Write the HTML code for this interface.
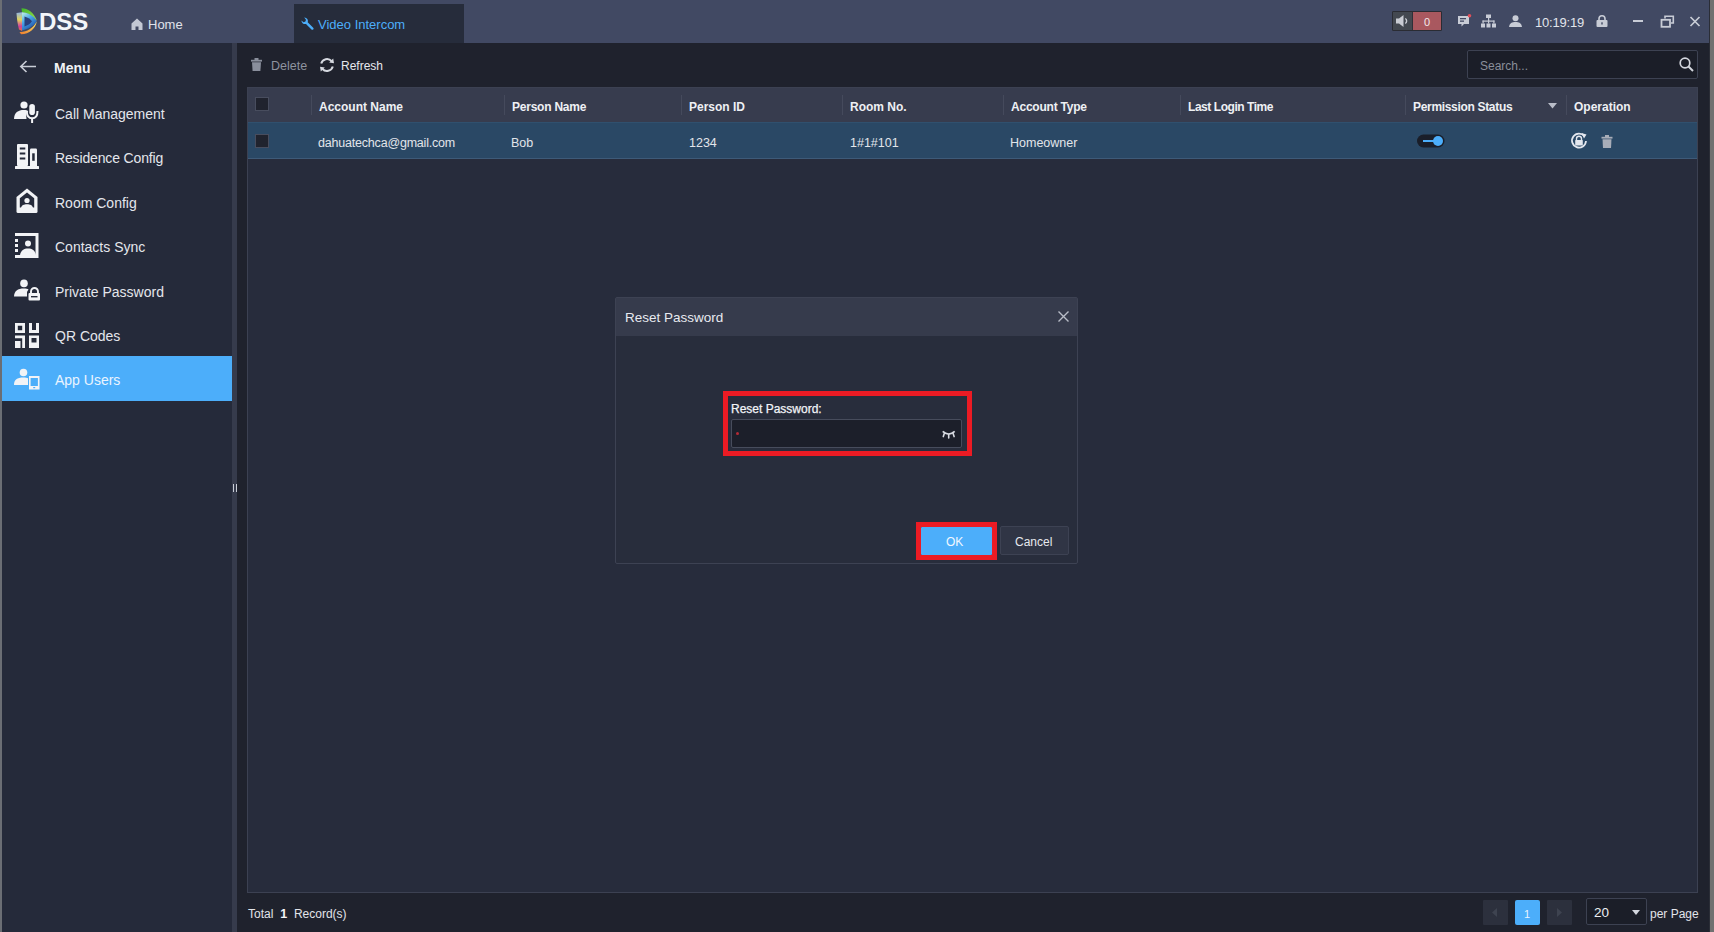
<!DOCTYPE html>
<html><head><meta charset="utf-8">
<style>
*{margin:0;padding:0;box-sizing:border-box}
html,body{width:1714px;height:932px;overflow:hidden;background:#1f222d;font-family:"Liberation Sans",sans-serif;color:#e6e8ee}
.a{position:absolute}
.t{position:absolute;white-space:pre;line-height:1}
#lb{left:0;top:0;width:2px;height:932px;background:#6b6e74}
#rb{left:1710px;top:0;width:4px;height:932px;background:#707070}
#top{left:2px;top:0;width:1708px;height:43px;background:#414963}
#tab{left:294px;top:4px;width:170px;height:39px;background:#262c3b}
#side{left:2px;top:43px;width:230px;height:889px;background:#252a3a}
#split{left:232px;top:43px;width:5px;height:889px;background:#363b4c}
#main{left:237px;top:43px;width:1473px;height:889px;background:#1f222d}
.mi{position:absolute;left:2px;width:230px;height:45px}
.mi .t{left:53px;font-size:14px;color:#e4e6ec}
.act{background:#4caefa}
#search{left:1467px;top:50px;width:231px;height:29px;background:#1b1e28;border:1px solid #3d4252;border-radius:2px}
#table{left:247px;top:87px;width:1451px;height:806px;background:#272c3c;border:1px solid #3c4152}
#thead{left:248px;top:88px;width:1449px;height:34px;background:#373c4e}
#row{left:248px;top:122px;width:1449px;height:37px;background:#2a4865;border-top:1px solid #30506e;border-bottom:1px solid #3e5a78}
.sep{position:absolute;top:95px;width:1px;height:20px;background:#454a5c}
.th{position:absolute;top:101px;font-size:12px;font-weight:bold;color:#eef0f4;white-space:pre;line-height:1}
.td{position:absolute;top:137px;font-size:12.5px;color:#e2e5ea;white-space:pre;line-height:1}
.cb{position:absolute;width:14px;height:14px;background:#20232e;border:1px solid #484d5e}
#dlg{left:615px;top:297px;width:463px;height:267px;background:#282d3c;border:1px solid #3d4253;border-radius:2px}
#dlgh{left:616px;top:298px;width:461px;height:38px;background:#363b4c}
</style></head>
<body>
<div class="a" id="top"></div>
<div class="a" id="lb"></div>
<div class="a" id="rb"></div>
<div class="a" id="tab"></div>

<!-- logo -->
<svg class="a" style="left:15px;top:7px" width="24" height="28" viewBox="0 0 24 28">
  <defs>
    <linearGradient id="gg" x1="0" y1="0" x2="1" y2="1"><stop offset="0" stop-color="#3fb52a"/><stop offset="1" stop-color="#9ee04a"/></linearGradient>
    <linearGradient id="gb" x1="0" y1="0" x2="0.6" y2="1"><stop offset="0" stop-color="#c8f5e0"/><stop offset="0.45" stop-color="#49a6e8"/><stop offset="1" stop-color="#1d4fa8"/></linearGradient>
    <linearGradient id="gl" x1="0" y1="0" x2="0" y2="1"><stop offset="0" stop-color="#8fb4e6"/><stop offset="0.4" stop-color="#e2d45a"/><stop offset="0.75" stop-color="#d0409e"/><stop offset="1" stop-color="#e8703a"/></linearGradient>
    <linearGradient id="go" x1="0" y1="1" x2="1" y2="0"><stop offset="0" stop-color="#f07a2a"/><stop offset="1" stop-color="#f2e46a"/></linearGradient>
  </defs>
  <path d="M6.5 1.2 C12 1 19 5 21.8 13.5 L19 12.3 C16 8 11.5 5.5 7 5.2 Z" fill="url(#gg)"/>
  <path d="M7 5.2 C13 5.5 19 9 21.8 14 C19 19 13.5 22 7 23.5 Z" fill="url(#gb)"/>
  <path d="M9.5 9.5 C13 10.5 16 12.5 17 14.2 C15.5 16.5 12.5 18.5 9.5 19.5 Z" fill="#2a3f7c"/>
  <path d="M1.5 6 L7 5.2 L7 24 L4 22.5 C2.5 17 1.8 11 1.5 6 Z" fill="url(#gl)"/>
  <path d="M4.5 25 C11 25.5 18 21.5 21.8 14.5 C20.5 21.5 14.5 27 6 27.3 Z" fill="url(#go)"/>
</svg>
<div class="t" style="left:39px;top:10px;font-size:24px;font-weight:bold;color:#f4f6fa">DSS</div>

<!-- home tab -->
<svg class="a" style="left:131px;top:18px" width="12" height="12" viewBox="0 0 12 12"><path d="M6 0.5 L11.5 5.5 L11.5 12 L7.5 12 L7.5 8.5 L4.5 8.5 L4.5 12 L0.5 12 L0.5 5.5 Z" fill="#c3c8d4"/></svg>
<div class="t" style="left:148px;top:18px;font-size:13px;color:#e0e3ea">Home</div>
<!-- video intercom tab -->
<svg class="a" style="left:301px;top:17px" width="13" height="13" viewBox="0 0 13 13"><path transform="translate(13 0) scale(-1 1)" d="M9.5 0.5 A3.5 3.5 0 0 0 6.3 5.2 L0.8 10.7 A1.2 1.2 0 0 0 2.5 12.4 L8 6.9 A3.5 3.5 0 0 0 12.6 3.6 L10.4 5.2 L8.6 4.6 L8.0 2.8 L9.8 0.6 Z" fill="#4caefa"/></svg>
<div class="t" style="left:318px;top:18px;font-size:13px;color:#4caefa">Video Intercom</div>

<!-- sidebar -->
<div class="a" id="side"></div>
<div class="a" id="split"></div>
<div class="a" style="left:233px;top:484px;width:1px;height:8px;background:#c8ccd6"></div>
<div class="a" style="left:236px;top:484px;width:1px;height:8px;background:#c8ccd6"></div>


<!-- top right -->
<div class="a" style="left:1392px;top:11px;width:50px;height:20px;background:#2e3038;border:1px solid #2a2c33;border-radius:1px"></div>
<div class="a" style="left:1393px;top:12px;width:19px;height:18px;background:#434850"></div>
<svg class="a" style="left:1395px;top:14px" width="15" height="14" viewBox="0 0 15 14"><path d="M1 4.5 H4 L8.5 1 V13 L4 9.5 H1 Z" fill="#c9ccd3"/><path d="M10.3 4.5 A3 3 0 0 1 10.3 9.5" stroke="#c9ccd3" stroke-width="1.4" fill="none"/></svg>
<div class="a" style="left:1413px;top:12px;width:28px;height:18px;background:#a9585f"></div>
<div class="t" style="left:1424px;top:17px;font-size:11px;color:#f4e8ea">0</div>
<svg class="a" style="left:1457px;top:14px" width="15" height="14" viewBox="0 0 15 14"><path d="M1 2 H12 V10 H7 L4.5 12.5 V10 H1 Z" fill="#c8ccd6"/><rect x="3" y="4" width="6" height="1.3" fill="#414963"/><rect x="3" y="6.5" width="4" height="1.3" fill="#414963"/><circle cx="12.5" cy="1.8" r="1.8" fill="#e0505a"/></svg>
<svg class="a" style="left:1481px;top:14px" width="15" height="14" viewBox="0 0 15 14"><rect x="5" y="0.5" width="5" height="3.5" fill="#c8ccd6"/><rect x="7" y="4" width="1.2" height="3" fill="#c8ccd6"/><rect x="1.5" y="6.5" width="12" height="1.2" fill="#c8ccd6"/><rect x="1.5" y="6.5" width="1.2" height="3" fill="#c8ccd6"/><rect x="12.3" y="6.5" width="1.2" height="3" fill="#c8ccd6"/><rect x="7" y="6.5" width="1.2" height="3" fill="#c8ccd6"/><rect x="0" y="9.5" width="4" height="4" fill="#c8ccd6"/><rect x="5.5" y="9.5" width="4" height="4" fill="#c8ccd6"/><rect x="11" y="9.5" width="4" height="4" fill="#c8ccd6"/></svg>
<svg class="a" style="left:1509px;top:15px" width="13" height="12" viewBox="0 0 13 12"><circle cx="6.5" cy="3.2" r="3" fill="#c8ccd6"/><path d="M0 12 C0.5 8 3 7 6.5 7 C10 7 12.5 8 13 12 Z" fill="#c8ccd6"/></svg>
<div class="t" style="left:1535px;top:16px;font-size:13px;letter-spacing:-0.2px;color:#e2e5ec">10:19:19</div>
<svg class="a" style="left:1596px;top:15px" width="12" height="12" viewBox="0 0 12 12"><path d="M3 5.5 V3.8 A3 3 0 0 1 9 3.8 V5.5" stroke="#c8ccd6" stroke-width="1.6" fill="none"/><rect x="0.5" y="5" width="11" height="7" rx="1" fill="#c8ccd6"/><rect x="5.3" y="7.3" width="1.4" height="2.2" fill="#414963"/></svg>
<div class="a" style="left:1633px;top:20px;width:10px;height:2px;background:#c8ccd6"></div>
<svg class="a" style="left:1660px;top:15px" width="15" height="13" viewBox="0 0 15 13"><rect x="1.5" y="4.8" width="8.5" height="7" stroke="#c8ccd6" stroke-width="1.8" fill="none"/><path d="M5 3.5 V1.2 H13.3 V8 H11" stroke="#c8ccd6" stroke-width="1.6" fill="none"/></svg>
<svg class="a" style="left:1689px;top:16px" width="12" height="11" viewBox="0 0 12 11"><path d="M1.5 1 L10.5 10 M10.5 1 L1.5 10" stroke="#c8ccd6" stroke-width="1.7"/></svg>
<div class="a" style="left:1709px;top:0;width:1px;height:932px;background:#2a2d36"></div>

<!-- menu header -->
<svg class="a" style="left:19px;top:60px" width="18" height="13" viewBox="0 0 18 13"><path d="M17 6.5 H2 M7.5 1 L1.8 6.5 L7.5 12" stroke="#c9cdd6" stroke-width="1.6" fill="none"/></svg>
<div class="t" style="left:54px;top:61px;font-size:14px;font-weight:bold;color:#f0f2f6">Menu</div>

<!-- menu items -->
<div class="mi" style="top:91px"><div class="t" style="top:16px">Call Management</div></div>
<div class="mi" style="top:135px"><div class="t" style="top:16px;letter-spacing:-0.15px">Residence Config</div></div>
<div class="mi" style="top:180px"><div class="t" style="top:16px">Room Config</div></div>
<div class="mi" style="top:224px"><div class="t" style="top:16px">Contacts Sync</div></div>
<div class="mi" style="top:269px"><div class="t" style="top:16px">Private Password</div></div>
<div class="mi" style="top:313px"><div class="t" style="top:16px">QR Codes</div></div>
<div class="mi act" style="top:356px"><div class="t" style="top:17px;color:#eaf4ff">App Users</div></div>

<!-- menu icons -->
<svg class="a" style="left:14px;top:101px" width="26" height="23" viewBox="0 0 26 23">
  <circle cx="10" cy="4" r="3.6" fill="#f2f3f6"/>
  <path d="M0 18 C0.3 11.5 4 9 10 9 C12 9 13.5 9.5 14.3 10 L12 12.5 L12.5 18 Z" fill="#f2f3f6"/>
  <rect x="15.3" y="3" width="5.6" height="11" rx="2.8" fill="#f2f3f6"/>
  <path d="M12.8 10 C12.8 15.5 15 17.3 18.1 17.3 C21.2 17.3 23.5 15.5 23.5 10" stroke="#f2f3f6" stroke-width="2" fill="none"/>
  <rect x="17.1" y="17" width="2" height="5" fill="#f2f3f6"/>
</svg>
<svg class="a" style="left:15px;top:144px" width="24" height="25" viewBox="0 0 24 25">
  <rect x="2" y="0" width="11" height="22" rx="1" fill="#f2f3f6"/>
  <rect x="4.8" y="3.5" width="5.5" height="2" fill="#252a3a"/>
  <rect x="4.8" y="8.5" width="5.5" height="2" fill="#252a3a"/>
  <rect x="4.8" y="13.5" width="5.5" height="2" fill="#252a3a"/>
  <rect x="15" y="4.5" width="7" height="18" rx="1.2" fill="#f2f3f6"/>
  <rect x="17.2" y="9.3" width="2.5" height="7.5" fill="#252a3a"/>
  <rect x="0" y="22" width="24" height="3" rx="0.5" fill="#f2f3f6"/>
</svg>
<svg class="a" style="left:16px;top:188px" width="22" height="26" viewBox="0 0 22 26">
  <path d="M11 0.5 L21.5 9 V23.5 Q21.5 25 20 25 H2 Q0.5 25 0.5 23.5 V9 Z" fill="#f2f3f6"/>
  <path d="M11 4.5 L18.2 10.3 V19.5 H3.8 V10.3 Z" fill="#252a3a"/>
  <circle cx="11" cy="12.5" r="2.6" fill="#f2f3f6"/>
  <path d="M5 20 C5.5 17 8 16.2 11 16.2 C14 16.2 16.5 17 17 20 Z" fill="#f2f3f6"/>
</svg>
<svg class="a" style="left:15px;top:233px" width="24" height="25" viewBox="0 0 24 25">
  <path d="M0 0 H23.5 V25 H0 V22 H20.5 V3 H0 Z" fill="#f2f3f6"/>
  <rect x="0" y="6" width="3" height="3" fill="#f2f3f6"/>
  <rect x="0" y="11" width="3" height="3" fill="#f2f3f6"/>
  <rect x="0" y="16" width="3" height="3" fill="#f2f3f6"/>
  <circle cx="13" cy="10.5" r="3" fill="#f2f3f6"/>
  <path d="M5 22 C6 17 9 15.5 13 15.5 C17 15.5 20 17 21 22 Z" fill="#f2f3f6"/>
</svg>
<svg class="a" style="left:14px;top:279px" width="26" height="22" viewBox="0 0 26 22">
  <circle cx="10" cy="4.4" r="3.8" fill="#f2f3f6"/>
  <path d="M0 17.5 C0.3 12 3.5 9.5 10 9.5 C12 9.5 13.5 9.8 14.5 10.3 L13 13 V17.5 Z" fill="#f2f3f6"/>
  <path d="M17 14.5 V12.5 A3.5 3.5 0 0 1 24 12.5 V14.5" stroke="#f2f3f6" stroke-width="1.9" fill="none"/>
  <rect x="14.5" y="14" width="11.5" height="7.5" rx="1" fill="#f2f3f6"/>
  <rect x="17" y="17" width="6.5" height="1.4" fill="#252a3a"/>
</svg>
<svg class="a" style="left:15px;top:323px" width="24" height="25" viewBox="0 0 24 25">
  <path d="M0 0 H10 V10 H0 Z M2.8 2.8 V7.2 H7.2 V2.8 Z" fill="#f2f3f6" fill-rule="evenodd"/>
  <path d="M14 0 H17 V7 H21 V0 H24 V10 H14 Z" fill="#f2f3f6"/>
  <path d="M0 12.5 H10 V25 H7.2 V15.3 H0 Z" fill="#f2f3f6"/>
  <rect x="0" y="18" width="5.5" height="7" fill="#f2f3f6"/>
  <path d="M14 12.5 H24 V25 H14 Z M16.5 15 V19.5 H21.5 V15 Z" fill="#f2f3f6" fill-rule="evenodd"/>
</svg>
<svg class="a" style="left:14px;top:368px" width="26" height="22" viewBox="0 0 26 22">
  <circle cx="9.5" cy="4.5" r="3.8" fill="#f2f3f6"/>
  <path d="M0 17 C0 11.5 3 9.5 9.5 9.5 C11.5 9.5 13 9.8 14 10.2 L14 17 Z" fill="#f2f3f6"/>
  <path d="M15 8 H25.5 V21.5 H15 Z M16.6 10 V18 H23.9 V10 Z" fill="#f2f3f6" fill-rule="evenodd"/>
  <rect x="19.2" y="19" width="2" height="1.2" fill="#4caefa"/>
</svg>

<!-- main -->
<svg class="a" style="left:251px;top:58px" width="11" height="13" viewBox="0 0 11 13"><rect x="3.5" y="0" width="4" height="2" fill="#8a8f9c"/><rect x="0" y="1.8" width="11" height="1.8" fill="#8a8f9c"/><path d="M1 4.2 H10 L9.4 13 H1.6 Z" fill="#8a8f9c"/></svg>
<div class="t" style="left:271px;top:60px;font-size:12.5px;color:#8e939f">Delete</div>
<svg class="a" style="left:319px;top:57px" width="16" height="16" viewBox="0 0 16 16"><path d="M12.6 4.2 A6 6 0 0 0 2.2 6.5" stroke="#d6d9e0" stroke-width="2" fill="none"/><path d="M3.4 11.8 A6 6 0 0 0 13.8 9.5" stroke="#d6d9e0" stroke-width="2" fill="none"/><path d="M10.2 5.6 L15 6.2 L14.2 1.4 Z" fill="#d6d9e0"/><path d="M5.8 10.4 L1 9.8 L1.8 14.6 Z" fill="#d6d9e0"/></svg>
<div class="t" style="left:341px;top:60px;font-size:12px;color:#e6e8ee">Refresh</div>

<div class="a" id="search"></div>
<div class="t" style="left:1480px;top:60px;font-size:12px;color:#8a8e9a">Search...</div>
<svg class="a" style="left:1679px;top:57px" width="15" height="15" viewBox="0 0 15 15"><circle cx="6" cy="6" r="4.8" stroke="#d4d7de" stroke-width="1.7" fill="none"/><path d="M9.5 9.5 L14 14" stroke="#d4d7de" stroke-width="1.9"/></svg>

<div class="a" id="table"></div>
<div class="a" id="thead"></div>
<div class="a" id="row"></div>
<div class="cb" style="left:255px;top:97px"></div>
<div class="cb" style="left:255px;top:134px"></div>
<div class="sep" style="left:311px"></div>
<div class="sep" style="left:504px"></div>
<div class="sep" style="left:681px"></div>
<div class="sep" style="left:842px"></div>
<div class="sep" style="left:1003px"></div>
<div class="sep" style="left:1180px"></div>
<div class="sep" style="left:1405px"></div>
<div class="sep" style="left:1566px"></div>
<div class="th" style="left:319px">Account Name</div>
<div class="th" style="left:512px;letter-spacing:-0.23px">Person Name</div>
<div class="th" style="left:689px">Person ID</div>
<div class="th" style="left:850px">Room No.</div>
<div class="th" style="left:1011px;letter-spacing:-0.22px">Account Type</div>
<div class="th" style="left:1188px;letter-spacing:-0.45px">Last Login Time</div>
<div class="th" style="left:1413px;letter-spacing:-0.32px">Permission Status</div>
<div class="th" style="left:1574px">Operation</div>
<svg class="a" style="left:1548px;top:103px" width="9" height="6" viewBox="0 0 9 6"><path d="M0 0 H9 L4.5 5.5 Z" fill="#b9bdc8"/></svg>

<div class="td" style="left:318px;letter-spacing:-0.2px">dahuatechca@gmail.com</div>
<div class="td" style="left:511px">Bob</div>
<div class="td" style="left:689px">1234</div>
<div class="td" style="left:850px">1#1#101</div>
<div class="td" style="left:1010px">Homeowner</div>
<svg class="a" style="left:1417px;top:134px" width="28" height="14" viewBox="0 0 28 14"><rect x="0" y="0.5" width="27.5" height="13" rx="6.5" fill="#1a1e29"/><rect x="6" y="6" width="12" height="2" fill="#4caefa"/><circle cx="21" cy="7" r="5" fill="#4caefa"/></svg>
<svg class="a" style="left:1570px;top:132px" width="18" height="18" viewBox="0 0 18 18"><path d="M14.5 4.2 A7 7 0 1 0 16 9" stroke="#e4e7ee" stroke-width="1.8" fill="none"/><path d="M11.5 1 L16.5 2.5 L14 6.5 Z" fill="#e4e7ee"/><path d="M6.5 8 V6.8 A2.5 2.5 0 0 1 11.5 6.8 V8" stroke="#e4e7ee" stroke-width="1.4" fill="none"/><rect x="5.2" y="8" width="7.6" height="5.6" rx="0.6" fill="#e4e7ee"/></svg>
<svg class="a" style="left:1601px;top:135px" width="12" height="13" viewBox="0 0 12 13"><rect x="4" y="0" width="4" height="2" fill="#a8adb8"/><rect x="0.5" y="1.8" width="11" height="1.8" fill="#a8adb8"/><path d="M1.5 4.2 H10.5 L10 13 H2 Z" fill="#a8adb8"/></svg>

<!-- footer -->
<div class="t" style="left:248px;top:908px;font-size:12px;color:#e2e4ea">Total <b style="font-size:12.5px;color:#f4f5f8"> 1 </b> Record(s)</div>
<div class="a" style="left:1483px;top:900px;width:25px;height:25px;background:#2c303d;border-radius:1px"></div>
<svg class="a" style="left:1492px;top:908px" width="6" height="9" viewBox="0 0 6 9"><path d="M5 0 V9 L0 4.5 Z" fill="#3e4350"/></svg>
<div class="a" style="left:1515px;top:900px;width:25px;height:25px;background:#4caefa;border-radius:2px"></div>
<div class="t" style="left:1524px;top:909px;font-size:11px;color:#e8f3ff">1</div>
<div class="a" style="left:1547px;top:900px;width:25px;height:25px;background:#2c303d;border-radius:1px"></div>
<svg class="a" style="left:1557px;top:908px" width="6" height="9" viewBox="0 0 6 9"><path d="M0 0 V9 L5 4.5 Z" fill="#3e4350"/></svg>
<div class="a" style="left:1586px;top:898px;width:61px;height:27px;background:#1b1e28;border:1px solid #3d4252;border-radius:2px"></div>
<div class="t" style="left:1594px;top:906px;font-size:13.5px;color:#eceef2">20</div>
<svg class="a" style="left:1632px;top:910px" width="8" height="5" viewBox="0 0 8 5"><path d="M0 0 H8 L4 5 Z" fill="#d4d7de"/></svg>
<div class="t" style="left:1650px;top:908px;font-size:12px;color:#e2e4ea">per Page</div>

<!-- dialog -->
<div class="a" id="dlg"></div>
<div class="a" id="dlgh"></div>
<div class="t" style="left:625px;top:311px;font-size:13.5px;color:#e8eaf0">Reset Password</div>
<svg class="a" style="left:1057px;top:310px" width="13" height="13" viewBox="0 0 13 13"><path d="M1.5 1.5 L11.5 11.5 M11.5 1.5 L1.5 11.5" stroke="#b9bdc8" stroke-width="1.4"/></svg>

<div class="a" style="left:723px;top:391px;width:249px;height:65px;border:5px solid #ec1b24"></div>
<div class="t" style="left:731px;top:403px;font-size:12px;color:#f2f4f8;-webkit-text-stroke:0.25px #f2f4f8">Reset Password:</div>
<div class="a" style="left:731px;top:419px;width:231px;height:29px;background:#1c1f2a;border:1px solid #474c5c;border-radius:2px"></div>
<div class="a" style="left:736px;top:432px;width:3px;height:3px;background:#b52a35;border-radius:50%"></div>
<svg class="a" style="left:942px;top:430px" width="14" height="9" viewBox="0 0 14 9"><path d="M0.7 1.3 Q6.7 6.8 12.7 1.3" stroke="#d8dbe2" stroke-width="1.7" fill="none"/><path d="M2.3 3.6 L1.3 6.6 M6.7 4.8 V7.9 M11.1 3.6 L12.1 6.6" stroke="#d8dbe2" stroke-width="1.6" stroke-linecap="round"/></svg>

<div class="a" style="left:916px;top:522px;width:81px;height:38px;border:5px solid #ec1b24"></div>
<div class="a" style="left:921px;top:527px;width:71px;height:28px;background:#4caefa;border-radius:1px"></div>
<div class="t" style="left:946px;top:536px;font-size:12px;color:#f2f8ff">OK</div>
<div class="a" style="left:1000px;top:526px;width:69px;height:29px;background:#303545;border:1px solid #3d4253;border-radius:2px"></div>
<div class="t" style="left:1015px;top:536px;font-size:12px;color:#e6e8ee">Cancel</div>
</body></html>
